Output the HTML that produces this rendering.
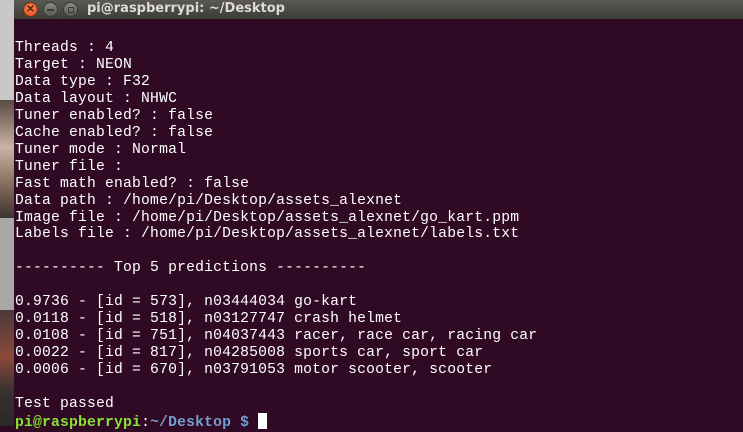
<!DOCTYPE html>
<html><head><meta charset="utf-8"><style>
html,body{margin:0;padding:0;width:743px;height:426px;overflow:hidden;background:#300a24;}
#left{position:absolute;left:0;top:0;width:14px;height:426px;background:#c8c8c8;}
#left .a{position:absolute;left:0;top:100px;width:14px;height:118px;background:linear-gradient(#5a4a42,#c9b3a5 40%,#8a7060 70%,#3a3230);}
#left .b{position:absolute;left:0;top:218px;width:14px;height:92px;background:#aaa8a4;}
#left .c{position:absolute;left:0;top:310px;width:14px;height:116px;background:linear-gradient(#4a3a3a,#8a4a3a 40%,#3a3030 70%,#2a2828);}
#title{position:absolute;left:14px;top:0;width:729px;height:19px;background:linear-gradient(#5a5954,#3d3d38);}
#title .t{position:absolute;left:73px;top:0px;font:bold 13px/17px "DejaVu Sans","Liberation Sans",sans-serif;color:#dfdbd2;}
.btn{position:absolute;top:2px;width:15px;height:15px;border-radius:50%;box-sizing:border-box;}
#term{position:absolute;left:14px;top:19px;width:729px;height:407px;background:#300a24;}
pre{position:absolute;left:1px;top:21px;margin:0;font:14.7px/16.95px "Liberation Mono","DejaVu Sans Mono",monospace;letter-spacing:0.19px;color:#fff;}
.g{color:#8ae234;font-weight:bold}.bl{color:#729fcf;font-weight:bold}
.cur{display:inline-block;width:9px;height:16px;background:#fff;vertical-align:-3px;}
</style></head><body>
<div id="left"><div class="a"></div><div class="b"></div><div class="c"></div></div>
<div id="title">
<div class="btn" style="left:9px;background:radial-gradient(circle at 50% 35%,#f58a5a,#df4a16);border:1px solid #7a2a10;color:#4a1a0a;font:bold 10px/13px sans-serif;text-align:center">✕</div>
<div class="btn" style="left:29px;background:linear-gradient(#8a8a84,#5a5a55);border:1px solid #3a3a36;"><div style="position:absolute;left:3px;top:6px;width:7px;height:1.5px;background:#3a3a36"></div></div>
<div class="btn" style="left:49px;background:linear-gradient(#8a8a84,#5a5a55);border:1px solid #3a3a36;"><div style="position:absolute;left:3.5px;top:3.5px;width:6px;height:6px;border:1px solid #3a3a36;box-sizing:border-box"></div></div>
<div class="t">pi@raspberrypi: ~/Desktop</div>
</div>
<div id="term"><pre>Threads : 4
Target : NEON
Data type : F32
Data layout : NHWC
Tuner enabled? : false
Cache enabled? : false
Tuner mode : Normal
Tuner file :
Fast math enabled? : false
Data path : /home/pi/Desktop/assets_alexnet
Image file : /home/pi/Desktop/assets_alexnet/go_kart.ppm
Labels file : /home/pi/Desktop/assets_alexnet/labels.txt

---------- Top 5 predictions ----------

0.9736 - [id = 573], n03444034 go-kart
0.0118 - [id = 518], n03127747 crash helmet
0.0108 - [id = 751], n04037443 racer, race car, racing car
0.0022 - [id = 817], n04285008 sports car, sport car
0.0006 - [id = 670], n03791053 motor scooter, scooter

Test passed
<span class="g">pi@raspberrypi</span>:<span class="bl">~/Desktop $</span> <span class="cur"></span></pre></div>
</body></html>
